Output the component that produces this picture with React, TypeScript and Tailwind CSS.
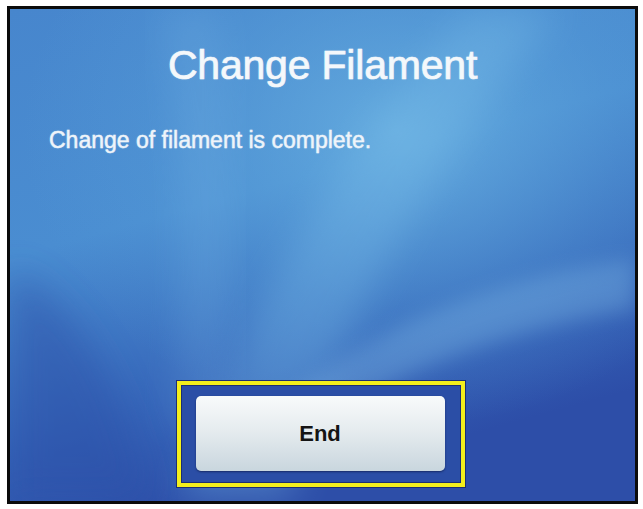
import React from "react";

// Soft wallpaper behind the dialog: blue gradient with light sweeping bands.
function Wallpaper() {
  return (
    <svg
      className="absolute inset-0 h-full w-full"
      viewBox="0 0 625 492"
      preserveAspectRatio="none"
    >
      <defs>
        <linearGradient id="base" x1="0" y1="0" x2="0.35" y2="1">
          <stop offset="0" stopColor="#4786cd" />
          <stop offset="0.45" stopColor="#4a8dd1" />
          <stop offset="0.8" stopColor="#3564b8" />
          <stop offset="1" stopColor="#2d4ea8" />
        </linearGradient>
        <radialGradient id="glow" cx="0.62" cy="0.25" r="0.6">
          <stop offset="0" stopColor="#6cb3e2" stopOpacity="0.8" />
          <stop offset="0.6" stopColor="#5aa2da" stopOpacity="0.3" />
          <stop offset="1" stopColor="#5aa2da" stopOpacity="0" />
        </radialGradient>
        <filter id="soft" x="-20%" y="-20%" width="140%" height="140%">
          <feGaussianBlur stdDeviation="10" />
        </filter>
        <filter id="softer" x="-20%" y="-20%" width="140%" height="140%">
          <feGaussianBlur stdDeviation="18" />
        </filter>
      </defs>
      <rect width="625" height="492" fill="url(#base)" />
      <rect width="625" height="492" fill="url(#glow)" />
      {/* broad light band rising from the lower middle to the top right */}
      <path
        d="M170 492 C 220 330, 320 150, 460 0 L 550 0 C 410 170, 320 330, 280 492 Z"
        fill="#7cc0ea"
        opacity="0.32"
        filter="url(#softer)"
      />
      {/* sweeping curve toward the right edge */}
      <path
        d="M250 420 C 330 330, 470 270, 625 250 L 625 300 C 490 320, 360 370, 280 440 Z"
        fill="#8cc8ee"
        opacity="0.3"
        filter="url(#soft)"
      />
      {/* faint vertical streak near the upper left */}
      <path
        d="M150 0 C 170 120, 180 260, 160 420 L 210 420 C 230 260, 220 120, 210 0 Z"
        fill="#79b6e6"
        opacity="0.22"
        filter="url(#softer)"
      />
      {/* darker lower left */}
      <path
        d="M0 260 C 80 300, 120 400, 140 492 L 0 492 Z"
        fill="#2c4ea6"
        opacity="0.45"
        filter="url(#softer)"
      />
    </svg>
  );
}

export default function App() {
  return (
    <div className="h-[509px] w-[643px] bg-white pl-[7px] pt-[6px] font-['Liberation_Sans',Arial,sans-serif]">
      <div className="relative flex h-[498px] w-[631px] flex-col overflow-hidden border-[3px] border-[#0b0b0b]">
        <Wallpaper />
        <div className="relative flex h-full flex-col">
          <h1 className="mt-[36px] text-center text-[41px] leading-[41px] font-normal tracking-[-0.2px] text-[#f4f8fb] [-webkit-text-stroke:0.7px_#f4f8fb] [text-shadow:0_0_2px_rgba(255,255,255,0.35)]">
            Change Filament
          </h1>
          <p className="mt-[43px] pl-[39px] text-[23px] leading-[23px] text-[#eef4fa] [-webkit-text-stroke:0.45px_#eef4fa] [text-shadow:0_0_2px_rgba(255,255,255,0.3)]">
            Change of filament is complete.
          </p>
          <div className="mt-auto mb-[14px] flex justify-center">
            <div className="ml-[-4px] h-[106px] w-[288px] border-[4px] border-[#f3ef1c] bg-[#2b4ea6] pt-[11px] pl-[15px] shadow-[0_0_0_1px_#1d2f73,inset_0_0_0_1px_#1d2f73]">
              <button className="flex h-[75px] w-[249px] items-center justify-center rounded-[5px] bg-[linear-gradient(#f8fafb,#e6ecef_45%,#c9d6de)] text-[22px] font-bold text-[#141414] shadow-[0_1px_2px_rgba(10,20,60,0.6)]">
                End
              </button>
            </div>
          </div>
        </div>
      </div>
    </div>
  );
}
